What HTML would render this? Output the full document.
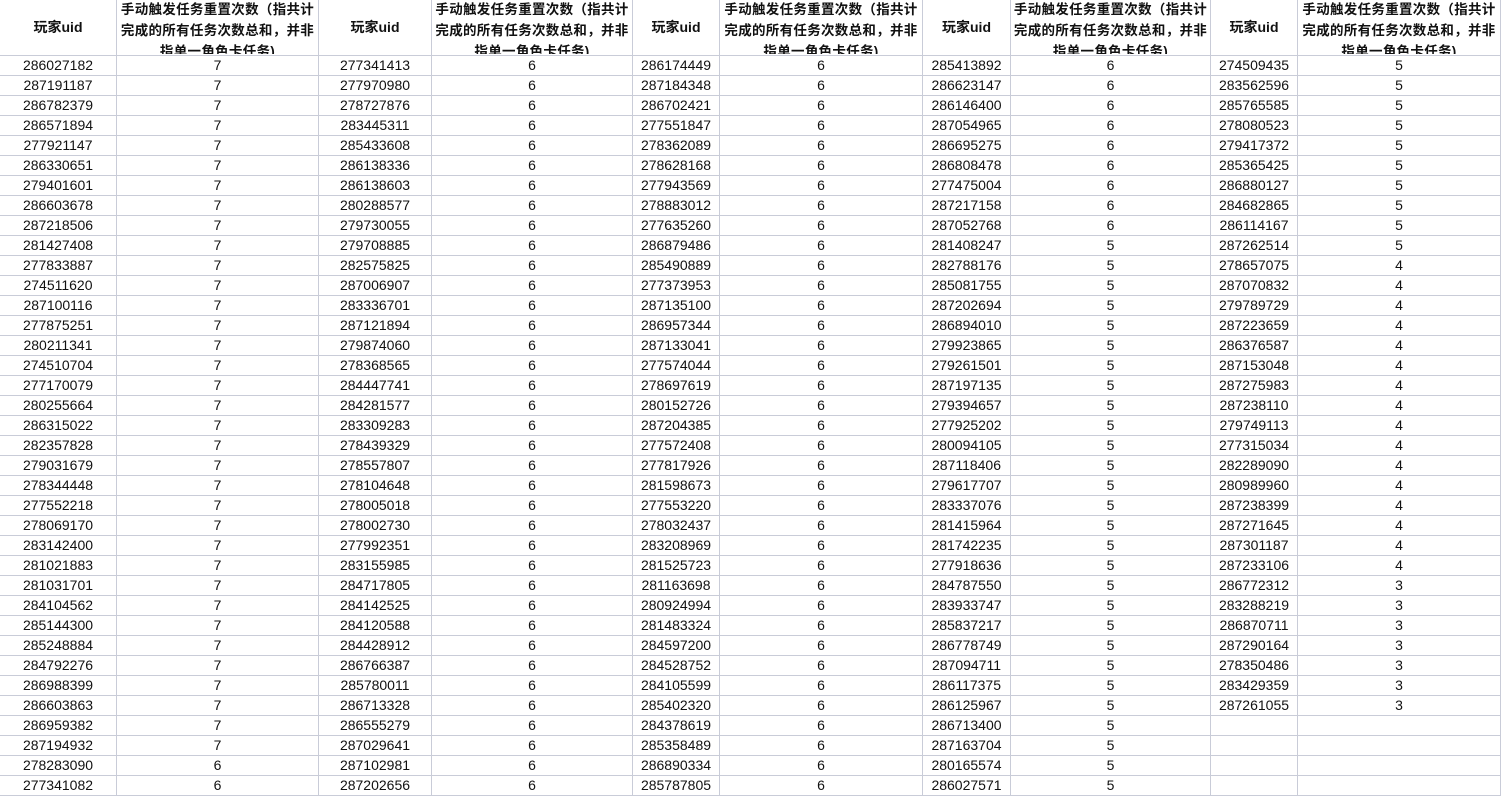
<!DOCTYPE html>
<html><head><meta charset="utf-8"><style>
body{margin:0;background:#fff;width:1504px;height:795px;overflow:hidden}
table{border-collapse:separate;border-spacing:0;table-layout:fixed;width:1501px;font-family:"Liberation Sans","Noto Sans CJK SC",sans-serif;font-size:14px;color:#111}
td{box-sizing:border-box;border-right:1px solid #c9ccd8;border-bottom:1px solid #c9ccd8;padding:0;text-align:center;height:20px;line-height:19px;white-space:nowrap;overflow:hidden}
tr.h td{height:56px;font-weight:bold;font-family:"Liberation Sans","Noto Sans CJK SC",sans-serif;font-size:14px;vertical-align:middle}
tr.h td.c{vertical-align:top;line-height:21px;font-size:13.5px;letter-spacing:0.3px}
tr.h td.c div{height:55px;overflow:hidden;margin-top:-1px}
</style></head><body>
<table>
<colgroup><col style="width:117px"><col style="width:202px"><col style="width:113px"><col style="width:201px"><col style="width:87px"><col style="width:203px"><col style="width:88px"><col style="width:200px"><col style="width:87px"><col style="width:203px"></colgroup>
<tr class="h"><td>玩家uid</td><td class="c"><div>手动触发任务重置次数（指共计<br>完成的所有任务次数总和，并非<br>指单一角色卡任务)</div></td><td>玩家uid</td><td class="c"><div>手动触发任务重置次数（指共计<br>完成的所有任务次数总和，并非<br>指单一角色卡任务)</div></td><td>玩家uid</td><td class="c"><div>手动触发任务重置次数（指共计<br>完成的所有任务次数总和，并非<br>指单一角色卡任务)</div></td><td>玩家uid</td><td class="c"><div>手动触发任务重置次数（指共计<br>完成的所有任务次数总和，并非<br>指单一角色卡任务)</div></td><td>玩家uid</td><td class="c"><div>手动触发任务重置次数（指共计<br>完成的所有任务次数总和，并非<br>指单一角色卡任务)</div></td></tr>
<tr><td>286027182</td><td>7</td><td>277341413</td><td>6</td><td>286174449</td><td>6</td><td>285413892</td><td>6</td><td>274509435</td><td>5</td></tr>
<tr><td>287191187</td><td>7</td><td>277970980</td><td>6</td><td>287184348</td><td>6</td><td>286623147</td><td>6</td><td>283562596</td><td>5</td></tr>
<tr><td>286782379</td><td>7</td><td>278727876</td><td>6</td><td>286702421</td><td>6</td><td>286146400</td><td>6</td><td>285765585</td><td>5</td></tr>
<tr><td>286571894</td><td>7</td><td>283445311</td><td>6</td><td>277551847</td><td>6</td><td>287054965</td><td>6</td><td>278080523</td><td>5</td></tr>
<tr><td>277921147</td><td>7</td><td>285433608</td><td>6</td><td>278362089</td><td>6</td><td>286695275</td><td>6</td><td>279417372</td><td>5</td></tr>
<tr><td>286330651</td><td>7</td><td>286138336</td><td>6</td><td>278628168</td><td>6</td><td>286808478</td><td>6</td><td>285365425</td><td>5</td></tr>
<tr><td>279401601</td><td>7</td><td>286138603</td><td>6</td><td>277943569</td><td>6</td><td>277475004</td><td>6</td><td>286880127</td><td>5</td></tr>
<tr><td>286603678</td><td>7</td><td>280288577</td><td>6</td><td>278883012</td><td>6</td><td>287217158</td><td>6</td><td>284682865</td><td>5</td></tr>
<tr><td>287218506</td><td>7</td><td>279730055</td><td>6</td><td>277635260</td><td>6</td><td>287052768</td><td>6</td><td>286114167</td><td>5</td></tr>
<tr><td>281427408</td><td>7</td><td>279708885</td><td>6</td><td>286879486</td><td>6</td><td>281408247</td><td>5</td><td>287262514</td><td>5</td></tr>
<tr><td>277833887</td><td>7</td><td>282575825</td><td>6</td><td>285490889</td><td>6</td><td>282788176</td><td>5</td><td>278657075</td><td>4</td></tr>
<tr><td>274511620</td><td>7</td><td>287006907</td><td>6</td><td>277373953</td><td>6</td><td>285081755</td><td>5</td><td>287070832</td><td>4</td></tr>
<tr><td>287100116</td><td>7</td><td>283336701</td><td>6</td><td>287135100</td><td>6</td><td>287202694</td><td>5</td><td>279789729</td><td>4</td></tr>
<tr><td>277875251</td><td>7</td><td>287121894</td><td>6</td><td>286957344</td><td>6</td><td>286894010</td><td>5</td><td>287223659</td><td>4</td></tr>
<tr><td>280211341</td><td>7</td><td>279874060</td><td>6</td><td>287133041</td><td>6</td><td>279923865</td><td>5</td><td>286376587</td><td>4</td></tr>
<tr><td>274510704</td><td>7</td><td>278368565</td><td>6</td><td>277574044</td><td>6</td><td>279261501</td><td>5</td><td>287153048</td><td>4</td></tr>
<tr><td>277170079</td><td>7</td><td>284447741</td><td>6</td><td>278697619</td><td>6</td><td>287197135</td><td>5</td><td>287275983</td><td>4</td></tr>
<tr><td>280255664</td><td>7</td><td>284281577</td><td>6</td><td>280152726</td><td>6</td><td>279394657</td><td>5</td><td>287238110</td><td>4</td></tr>
<tr><td>286315022</td><td>7</td><td>283309283</td><td>6</td><td>287204385</td><td>6</td><td>277925202</td><td>5</td><td>279749113</td><td>4</td></tr>
<tr><td>282357828</td><td>7</td><td>278439329</td><td>6</td><td>277572408</td><td>6</td><td>280094105</td><td>5</td><td>277315034</td><td>4</td></tr>
<tr><td>279031679</td><td>7</td><td>278557807</td><td>6</td><td>277817926</td><td>6</td><td>287118406</td><td>5</td><td>282289090</td><td>4</td></tr>
<tr><td>278344448</td><td>7</td><td>278104648</td><td>6</td><td>281598673</td><td>6</td><td>279617707</td><td>5</td><td>280989960</td><td>4</td></tr>
<tr><td>277552218</td><td>7</td><td>278005018</td><td>6</td><td>277553220</td><td>6</td><td>283337076</td><td>5</td><td>287238399</td><td>4</td></tr>
<tr><td>278069170</td><td>7</td><td>278002730</td><td>6</td><td>278032437</td><td>6</td><td>281415964</td><td>5</td><td>287271645</td><td>4</td></tr>
<tr><td>283142400</td><td>7</td><td>277992351</td><td>6</td><td>283208969</td><td>6</td><td>281742235</td><td>5</td><td>287301187</td><td>4</td></tr>
<tr><td>281021883</td><td>7</td><td>283155985</td><td>6</td><td>281525723</td><td>6</td><td>277918636</td><td>5</td><td>287233106</td><td>4</td></tr>
<tr><td>281031701</td><td>7</td><td>284717805</td><td>6</td><td>281163698</td><td>6</td><td>284787550</td><td>5</td><td>286772312</td><td>3</td></tr>
<tr><td>284104562</td><td>7</td><td>284142525</td><td>6</td><td>280924994</td><td>6</td><td>283933747</td><td>5</td><td>283288219</td><td>3</td></tr>
<tr><td>285144300</td><td>7</td><td>284120588</td><td>6</td><td>281483324</td><td>6</td><td>285837217</td><td>5</td><td>286870711</td><td>3</td></tr>
<tr><td>285248884</td><td>7</td><td>284428912</td><td>6</td><td>284597200</td><td>6</td><td>286778749</td><td>5</td><td>287290164</td><td>3</td></tr>
<tr><td>284792276</td><td>7</td><td>286766387</td><td>6</td><td>284528752</td><td>6</td><td>287094711</td><td>5</td><td>278350486</td><td>3</td></tr>
<tr><td>286988399</td><td>7</td><td>285780011</td><td>6</td><td>284105599</td><td>6</td><td>286117375</td><td>5</td><td>283429359</td><td>3</td></tr>
<tr><td>286603863</td><td>7</td><td>286713328</td><td>6</td><td>285402320</td><td>6</td><td>286125967</td><td>5</td><td>287261055</td><td>3</td></tr>
<tr><td>286959382</td><td>7</td><td>286555279</td><td>6</td><td>284378619</td><td>6</td><td>286713400</td><td>5</td><td></td><td></td></tr>
<tr><td>287194932</td><td>7</td><td>287029641</td><td>6</td><td>285358489</td><td>6</td><td>287163704</td><td>5</td><td></td><td></td></tr>
<tr><td>278283090</td><td>6</td><td>287102981</td><td>6</td><td>286890334</td><td>6</td><td>280165574</td><td>5</td><td></td><td></td></tr>
<tr><td>277341082</td><td>6</td><td>287202656</td><td>6</td><td>285787805</td><td>6</td><td>286027571</td><td>5</td><td></td><td></td></tr>
</table>
</body></html>
